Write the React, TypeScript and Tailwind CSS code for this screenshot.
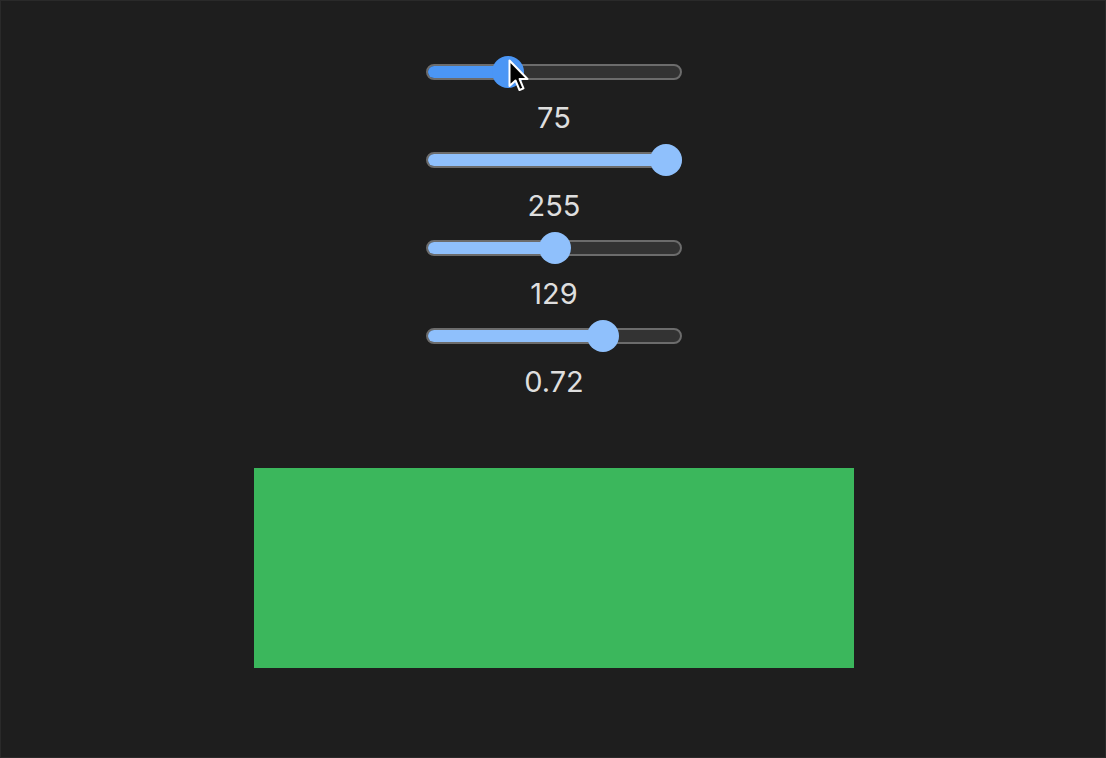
import React from "react";

type SliderProps = { value: number; max: number; active?: boolean };

function Slider({ value, max, active }: SliderProps) {
    const center = 16 + (value / max) * 224;
    return (
        <div className="relative h-8 w-[256px]">
            <div className="absolute left-0 right-0 top-2 h-4 overflow-hidden rounded-full border-2 border-[#6c6c6c] bg-[#333333]">
                <div
                    className={active ? "h-full bg-[#4b96f5]" : "h-full bg-[#8fc0fc]"}
                    style={{ width: center }}
                />
            </div>
            <div
                className={
                    active
                        ? "absolute top-0 h-8 w-8 -translate-x-1/2 rounded-full bg-[#4b96f5]"
                        : "absolute top-0 h-8 w-8 -translate-x-1/2 rounded-full bg-[#8fc0fc]"
                }
                style={{ left: center }}
            />
        </div>
    );
}

function Cursor() {
    return (
        <svg
            className="absolute left-[507px] top-[58px]"
            width="22"
            height="36"
            viewBox="0 0 22 36"
        >
            <path
                d="M1.5 1.5 L1.5 27 L7.5 21.5 L11.5 31 L15.5 29.3 L11.6 20 L19.5 20 Z"
                fill="#000"
                stroke="#fff"
                strokeWidth="2"
                strokeLinejoin="round"
            />
        </svg>
    );
}

export default function App() {
    const rows = [
        { value: 75, max: 255, label: "75", active: true },
        { value: 255, max: 255, label: "255" },
        { value: 129, max: 255, label: "129" },
        { value: 0.72, max: 1, label: "0.72" },
    ];
    return (
        <div className="relative flex h-[758px] w-full flex-col items-center border border-[#2a2a2a] bg-[#1e1e1e] pl-[2px] pt-[55px] font-['Inter',sans-serif]">
            {rows.map((r) => (
                <div key={r.label} className="flex flex-col items-center">
                    <Slider value={r.value} max={r.max} active={r.active} />
                    <div className="mb-2 mt-3 text-[29px] leading-9 text-[#dedede]">
                        {r.label}
                    </div>
                </div>
            ))}
            <div className="mt-[60px] h-[200px] w-[600px] bg-[#3bb75c]" />
            <Cursor />
        </div>
    );
}
